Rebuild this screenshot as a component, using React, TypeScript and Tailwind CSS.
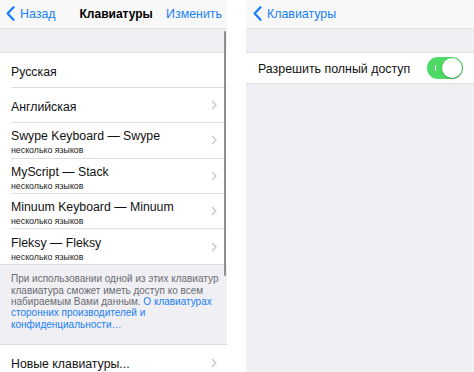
import React from 'react';

const font = { fontFamily: '"Liberation Sans", Arial, sans-serif' };

function BackChevron() {
  return (
    <svg width="9" height="15" viewBox="0 0 9 15" className="shrink-0">
      <path d="M7.5 1.2 L1.6 7.5 L7.5 13.8" fill="none" stroke="#147efb" strokeWidth="2.2" strokeLinecap="round" strokeLinejoin="round" />
    </svg>
  );
}

function RowChevron() {
  return (
    <svg width="6" height="10" viewBox="0 0 6 10" className="shrink-0">
      <path d="M1 1 L5 5 L1 9" fill="none" stroke="#c7c7cc" strokeWidth="1.3" />
    </svg>
  );
}

type Kb = { title: string; sub?: string; chevron?: boolean };

const keyboards: Kb[] = [
  { title: 'Русская' },
  { title: 'Английская', chevron: true },
  { title: 'Swype Keyboard — Swype', sub: 'несколько языков', chevron: true },
  { title: 'MyScript — Stack', sub: 'несколько языков', chevron: true },
  { title: 'Minuum Keyboard — Minuum', sub: 'несколько языков', chevron: true },
  { title: 'Fleksy — Fleksy', sub: 'несколько языков', chevron: true },
];

export default function App() {
  return (
    <div className="flex w-[474px] h-[372px] overflow-hidden bg-white text-black" style={font}>
      {/* left screen */}
      <div className="w-[227px] shrink-0 flex flex-col relative">
        <div className="h-[29px] shrink-0 bg-[#f8f8f8] border-b border-[#e2e2e4] flex items-center pl-[6px] pr-[5px] text-[12.4px]">
          <div className="flex items-center gap-[5px] text-[#1a7ff5]">
            <BackChevron />
            <span>Назад</span>
          </div>
          <div className="ml-[24px] font-bold text-[12px]">Клавиатуры</div>
          <div className="ml-auto text-[#1a7ff5]">Изменить</div>
        </div>
        <div className="h-[24px] shrink-0 bg-[#efeff4] border-b border-[#dcdce0]" />
        <div className="flex flex-col bg-white">
          {keyboards.map((k, i) => (
            <div key={k.title} className="h-[35.2px] shrink-0 flex items-stretch pl-[11px]">
              <div className={`flex-1 flex items-center pr-[10px] ${i < keyboards.length - 1 ? 'border-b border-[#e0e0e3]' : ''}`}>
                <div className="flex-1 flex flex-col justify-center pt-[4px]">
                  <div className="text-[12.3px] leading-[17px] text-[#111]">{k.title}</div>
                  {k.sub && <div className="text-[8.8px] leading-[11px] text-[#222]">{k.sub}</div>}
                </div>
                {k.chevron && <RowChevron />}
              </div>
            </div>
          ))}
        </div>
        <div className="h-[81px] shrink-0 bg-[#efeff4] border-t border-[#dcdce0] border-b px-[11px] pt-[8px] text-[10px] leading-[11.4px] text-[#6d6d72] whitespace-nowrap">
          <div>При использовании одной из этих клавиатур</div>
          <div>клавиатура сможет иметь доступ ко всем</div>
          <div>
            набираемым Вами данным. <span className="text-[#1a7ff5]">О клавиатурах</span>
          </div>
          <div className="text-[#1a7ff5]">сторонних производителей и</div>
          <div className="text-[#1a7ff5]">конфиденциальности…</div>
        </div>
        <div className="h-[36px] shrink-0 flex items-center pl-[11px] pr-[10px] bg-white">
          <div className="flex-1 text-[12.3px] text-[#111] pt-[3px]">Новые клавиатуры...</div>
          <RowChevron />
        </div>
        <div className="absolute left-[224px] top-[31px] w-[2px] h-[245px] bg-[#8e8e93] rounded-full" />
      </div>

      <div className="w-[19px] shrink-0 bg-white" />

      {/* right screen */}
      <div className="flex-1 flex flex-col">
        <div className="h-[29px] shrink-0 bg-[#f8f8f8] border-b border-[#e2e2e4] flex items-center px-[7px]">
          <div className="flex items-center gap-[5px] text-[#1a7ff5] text-[12.4px]">
            <BackChevron />
            <span>Клавиатуры</span>
          </div>
        </div>
        <div className="h-[24px] shrink-0 bg-[#efeff4] border-b border-[#dcdce0]" />
        <div className="h-[31px] shrink-0 bg-white border-b border-[#dcdce0] flex items-center pl-[12px] pr-[11px]">
          <div className="flex-1 text-[12.4px] text-[#111] pt-[2px]">Разрешить полный доступ</div>
          <div className="relative w-[36px] h-[22px] rounded-full bg-[#4cd964] flex items-center justify-end px-[1px]">
            <div className="absolute left-[8px] top-[8px] w-[1px] h-[6px] bg-white" />
            <div className="w-[20px] h-[20px] rounded-full bg-white shadow-[0_1px_2px_rgba(0,0,0,0.3)]" />
          </div>
        </div>
        <div className="flex-1 bg-[#efeff4]" />
      </div>
    </div>
  );
}
